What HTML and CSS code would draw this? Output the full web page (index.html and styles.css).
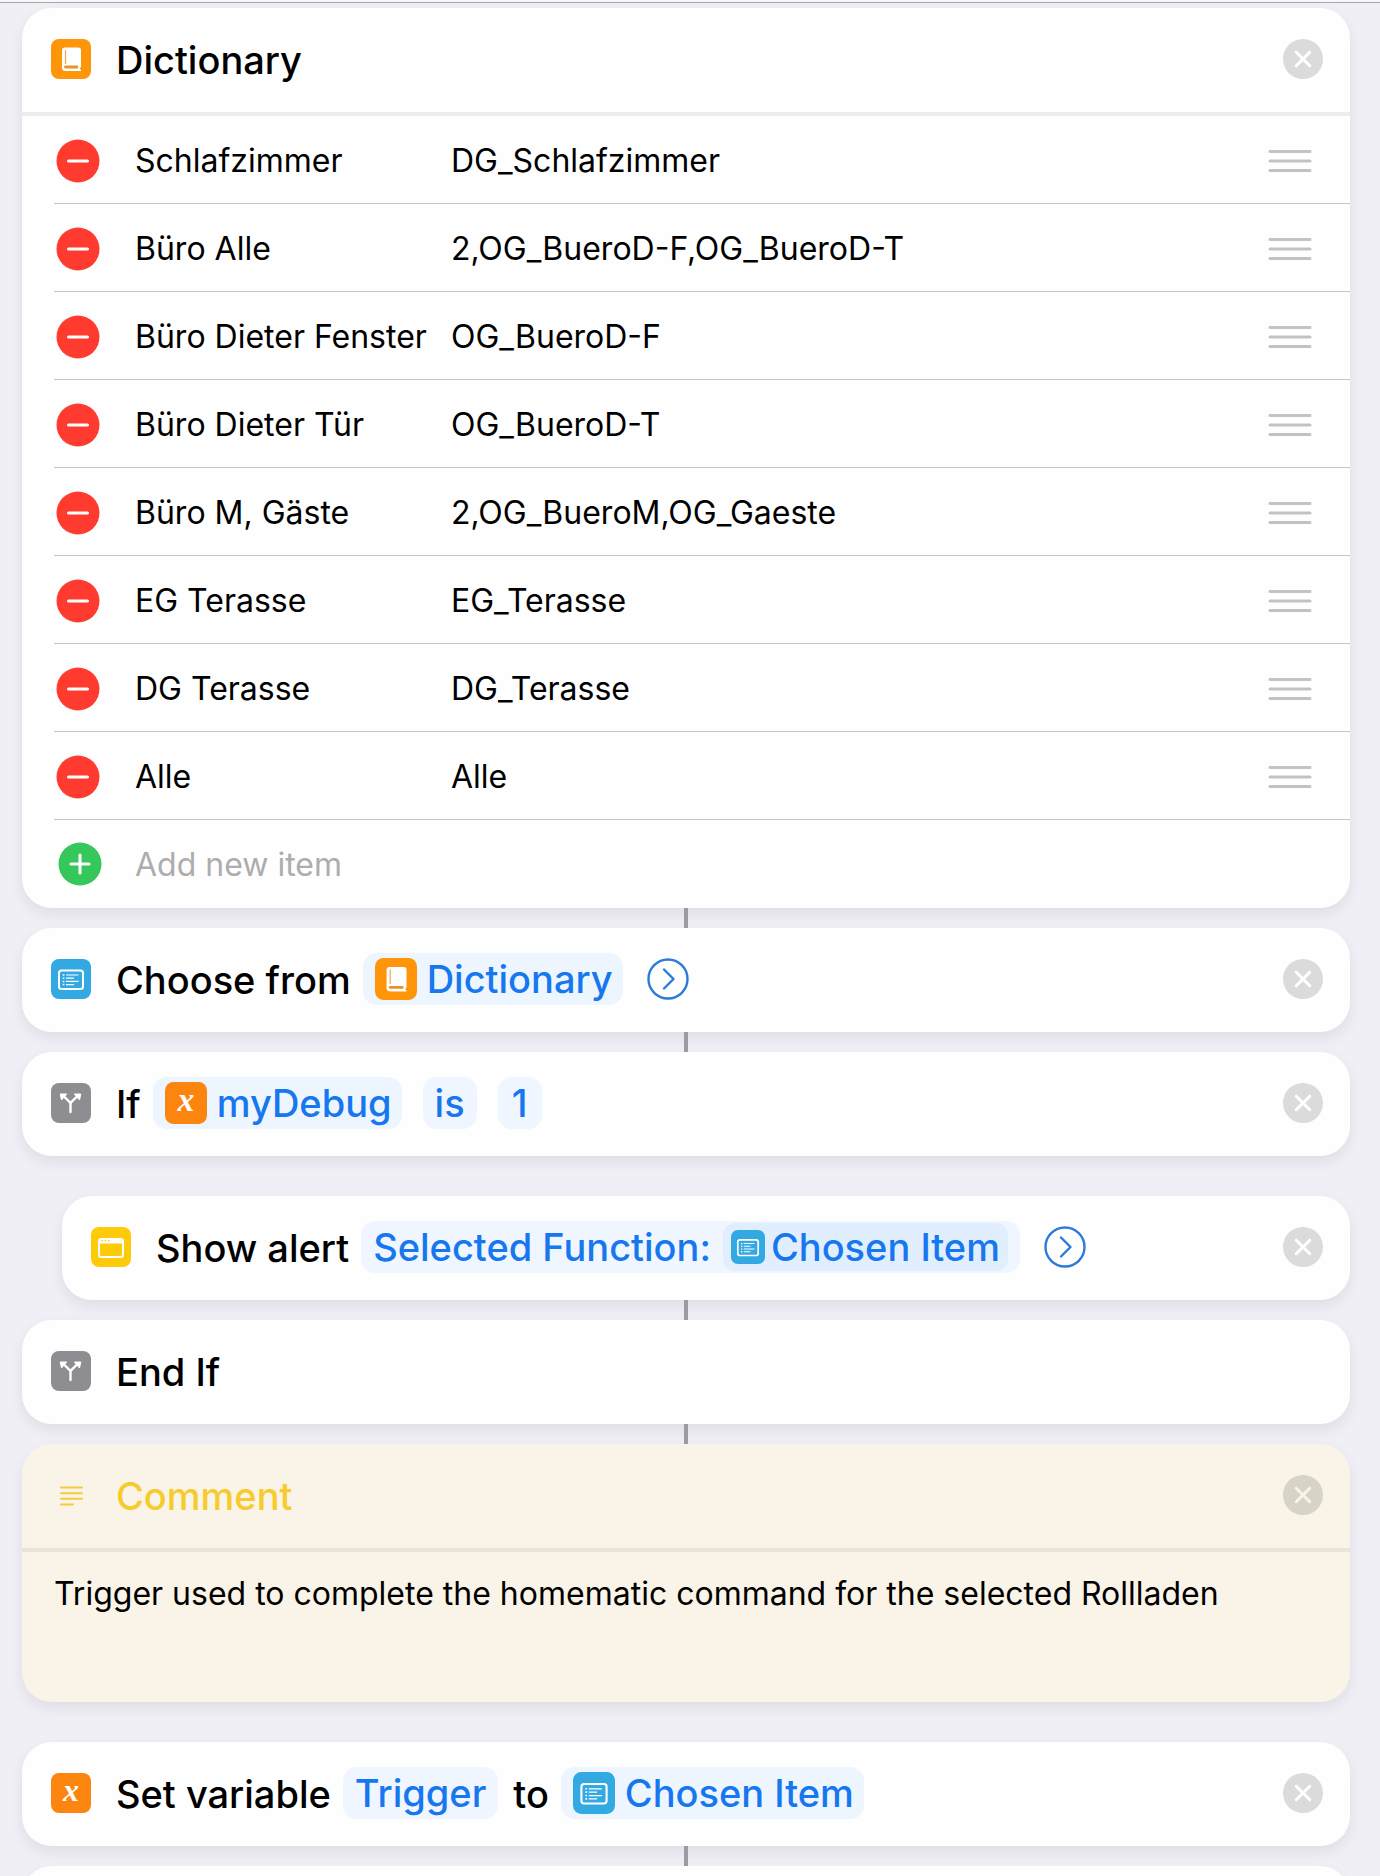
FILE: index.html
```
<!DOCTYPE html>
<html lang="en">
<head>
    <meta charset="UTF-8">
    <meta name="viewport" content="width=device-width, initial-scale=1.0">
    <title>Shortcut</title>
    <link rel="stylesheet" href="styles.css">
</head>
<body>
    <!-- icons used several times -->
    <svg class="sprite" aria-hidden="true">
        <symbol id="book" viewBox="0 0 40 40">
            <rect width="40" height="40" rx="8" fill="#ff9508"/>
            <path d="M14 8.500h13.500q2.500 0 2.500 2.500v16.500q0 .9-.9 1.200v1.900h.9v1.300H14.500q-3.500 0-3.500-3.500V11.500q0-3 3-3z" fill="#fff"/>
            <path d="M14.500 11v14" stroke="#f0ab4e" stroke-width="1.200"/>
            <path d="M14.500 26.600h12.500v2.800h-12.500q-1.400 0-1.400-1.400t1.400-1.400z" fill="#e8932a"/>
        </symbol>
        <symbol id="list" viewBox="0 0 40 40">
            <rect width="40" height="40" rx="8" fill="#32a9e2"/>
            <rect x="8" y="11.500" width="24" height="18.500" rx="2.500" fill="none" stroke="#fff" stroke-width="2"/>
            <path d="M15 16h12.500M15 19.200h8M15 22.400h12.500M15 25.600h8" stroke="#fff" stroke-width="1.200"/>
            <path d="M11.800 16h1.600M11.800 19.200h1.600M11.800 22.400h1.600M11.800 25.600h1.600" stroke="#fff" stroke-width="1.500"/>
        </symbol>
        <symbol id="branch" viewBox="0 0 40 40">
            <rect width="40" height="40" rx="8" fill="#8e8d92"/>
            <path d="M19.500 29v-8q0-1-.8-1.800L13 13.500M19.500 21q0-1 .8-1.800L26 13.500" fill="none" stroke="#fff" stroke-width="2.400" stroke-linecap="round"/>
            <path d="M9.200 11h6.500l-5.200 6zM29.800 11h-6.500l5.200 6z" fill="#fff" stroke="#fff" stroke-width="1" stroke-linejoin="round"/>
        </symbol>
        <symbol id="variable" viewBox="0 0 40 40">
            <rect width="40" height="40" rx="8" fill="#fc8510"/>
            <text x="20" y="28" text-anchor="middle" class="var-letter">x</text>
        </symbol>
        <symbol id="window" viewBox="0 0 40 40">
            <rect width="40" height="40" rx="8" fill="#fecb0a"/>
            <rect x="8" y="12" width="24" height="18" rx="2.500" fill="none" stroke="#fff" stroke-width="2"/>
            <path d="M8 12h24v4.500H8z" fill="#fff"/>
            <path d="M10.500 13.700h1.500M13.700 13.700h1.500M16.900 13.700h1.500" stroke="#fecb0a" stroke-width="1.300"/>
        </symbol>
        <symbol id="lines" viewBox="0 0 40 40">
            <path d="M10 12.500h21M10 18.200h21M10 23.700h21M10 29.500h12" stroke="#f3cd3f" stroke-width="2" stroke-linecap="round"/>
        </symbol>
        <symbol id="cross" viewBox="0 0 40 40">
            <path d="M13.200 13.200l13.600 13.600M26.800 13.200l-13.600 13.600" stroke="currentColor" stroke-width="3" stroke-linecap="round"/>
        </symbol>
        <symbol id="chevron" viewBox="0 0 42 42">
            <circle cx="21" cy="21" r="19.500" fill="none" stroke="currentColor" stroke-width="2.400"/>
            <path d="M17 11.500l9.500 9.500-9.500 9.500" fill="none" stroke="currentColor" stroke-width="2.400" stroke-linecap="round" stroke-linejoin="round"/>
        </symbol>
        <symbol id="minus" viewBox="0 0 44 44">
            <circle cx="22" cy="22" r="21.500" fill="#ff3b30"/>
            <path d="M12.500 22h19" stroke="#fff" stroke-width="3" stroke-linecap="round"/>
        </symbol>
        <symbol id="plus" viewBox="0 0 44 44">
            <circle cx="22" cy="22" r="21.500" fill="#35c759"/>
            <path d="M13 22h18M22 13v18" stroke="#fff" stroke-width="3" stroke-linecap="round"/>
        </symbol>
        <symbol id="grip" viewBox="0 0 44 24">
            <path d="M2 2.500h40M2 12h40M2 21.500h40" stroke="#c3c3c5" stroke-width="3" stroke-linecap="round"/>
        </symbol>
    </svg>

    <main class="editor">
        <section class="card">
            <div class="action">
                <svg class="icon"><use href="#book"/></svg>
                <span class="label">Dictionary</span>
                <button class="close" aria-label="Remove Dictionary"><svg><use href="#cross"/></svg></button>
            </div>
            <ul class="items">
                <li class="item">
                    <button class="round" aria-label="Delete item"><svg><use href="#minus"/></svg></button>
                    <input class="key" aria-label="Key" value="Schlafzimmer">
                    <input class="value" aria-label="Value" value="DG_Schlafzimmer">
                    <svg class="grip"><use href="#grip"/></svg>
                </li>
                <li class="item">
                    <button class="round" aria-label="Delete item"><svg><use href="#minus"/></svg></button>
                    <input class="key" aria-label="Key" value="Büro Alle">
                    <input class="value" aria-label="Value" value="2,OG_BueroD-F,OG_BueroD-T">
                    <svg class="grip"><use href="#grip"/></svg>
                </li>
                <li class="item">
                    <button class="round" aria-label="Delete item"><svg><use href="#minus"/></svg></button>
                    <input class="key" aria-label="Key" value="Büro Dieter Fenster">
                    <input class="value" aria-label="Value" value="OG_BueroD-F">
                    <svg class="grip"><use href="#grip"/></svg>
                </li>
                <li class="item">
                    <button class="round" aria-label="Delete item"><svg><use href="#minus"/></svg></button>
                    <input class="key" aria-label="Key" value="Büro Dieter Tür">
                    <input class="value" aria-label="Value" value="OG_BueroD-T">
                    <svg class="grip"><use href="#grip"/></svg>
                </li>
                <li class="item">
                    <button class="round" aria-label="Delete item"><svg><use href="#minus"/></svg></button>
                    <input class="key" aria-label="Key" value="Büro M, Gäste">
                    <input class="value" aria-label="Value" value="2,OG_BueroM,OG_Gaeste">
                    <svg class="grip"><use href="#grip"/></svg>
                </li>
                <li class="item">
                    <button class="round" aria-label="Delete item"><svg><use href="#minus"/></svg></button>
                    <input class="key" aria-label="Key" value="EG Terasse">
                    <input class="value" aria-label="Value" value="EG_Terasse">
                    <svg class="grip"><use href="#grip"/></svg>
                </li>
                <li class="item">
                    <button class="round" aria-label="Delete item"><svg><use href="#minus"/></svg></button>
                    <input class="key" aria-label="Key" value="DG Terasse">
                    <input class="value" aria-label="Value" value="DG_Terasse">
                    <svg class="grip"><use href="#grip"/></svg>
                </li>
                <li class="item">
                    <button class="round" aria-label="Delete item"><svg><use href="#minus"/></svg></button>
                    <input class="key" aria-label="Key" value="Alle">
                    <input class="value" aria-label="Value" value="Alle">
                    <svg class="grip"><use href="#grip"/></svg>
                </li>
            </ul>
            <button class="add-item">
                <svg><use href="#plus"/></svg>
                <span>Add new item</span>
            </button>
        </section>

        <div class="connector"></div>

        <section class="card">
            <div class="action">
                <svg class="icon"><use href="#list"/></svg>
                <span class="label">Choose from</span>
                <button class="pill"><svg class="pill-icon"><use href="#book"/></svg>Dictionary</button>
                <button class="more" aria-label="Show more"><svg><use href="#chevron"/></svg></button>
                <button class="close" aria-label="Remove Choose from"><svg><use href="#cross"/></svg></button>
            </div>
        </section>

        <div class="connector"></div>

        <section class="card">
            <div class="action">
                <svg class="icon"><use href="#branch"/></svg>
                <span class="label">If</span>
                <button class="pill"><svg class="pill-icon"><use href="#variable"/></svg>myDebug</button>
                <button class="pill plain">is</button>
                <button class="pill plain">1</button>
                <button class="close" aria-label="Remove If"><svg><use href="#cross"/></svg></button>
            </div>
        </section>

        <section class="card nested spaced">
            <div class="action">
                <svg class="icon"><use href="#window"/></svg>
                <span class="label">Show alert</span>
                <button class="pill plain">Selected Function:<span class="token"><svg><use href="#list"/></svg>Chosen Item</span></button>
                <button class="more" aria-label="Show more"><svg><use href="#chevron"/></svg></button>
                <button class="close" aria-label="Remove Show alert"><svg><use href="#cross"/></svg></button>
            </div>
        </section>

        <div class="connector"></div>

        <section class="card">
            <div class="action">
                <svg class="icon"><use href="#branch"/></svg>
                <span class="label">End If</span>
            </div>
        </section>

        <div class="connector"></div>

        <section class="card comment">
            <div class="action">
                <svg class="icon"><use href="#lines"/></svg>
                <label class="label" for="comment">Comment</label>
                <button class="close" aria-label="Remove Comment"><svg><use href="#cross"/></svg></button>
            </div>
            <textarea class="comment-text" id="comment" rows="2">Trigger used to complete the homematic command for the selected Rollladen</textarea>
        </section>

        <section class="card spaced">
            <div class="action">
                <svg class="icon"><use href="#variable"/></svg>
                <span class="label">Set variable</span>
                <button class="pill plain">Trigger</button>
                <span class="label">to</span>
                <button class="pill"><svg class="pill-icon"><use href="#list"/></svg>Chosen Item</button>
                <button class="close" aria-label="Remove Set variable"><svg><use href="#cross"/></svg></button>
            </div>
        </section>

        <div class="connector"></div>

        <section class="card">
            <div class="action"></div>
        </section>
    </main>
</body>
</html>
```

FILE: styles.css
```
* {
    box-sizing: border-box;
}

body {
    margin: 0;
    background-color: #f0eff5;
    color: #000;
    font-family: Inter, "Liberation Sans", sans-serif;
}

button,
input,
textarea {
    margin: 0;
    padding: 0;
    border: none;
    background: none;
    color: inherit;
    font: inherit;
}

button {
    cursor: pointer;
}

svg {
    display: block;
    flex: none;
}

.sprite {
    display: none;
}

.var-letter {
    font: italic bold 32px "Liberation Serif", serif;
    fill: #fff;
}

.editor {
    height: 100vh;
    overflow: hidden;
    padding: 8px 30px 0 22px;
    background: linear-gradient(#f7f7fa 2px, #a9a8ad 2px, #a9a8ad 3px, #f0eff5 3px);
}

.card {
    background-color: #fefefe;
    border-radius: 30px;
    box-shadow: 0 6px 14px rgba(30, 30, 50, 0.08);
}

.nested {
    margin-left: 40px;
}

.spaced {
    margin-top: 40px;
}

/* line between two actions */
.connector {
    position: relative;
    width: 4px;
    height: 20px;
    margin: 0 auto;
    background-color: #9c9ba4;
}

.action {
    display: flex;
    align-items: center;
    height: 104px;
    padding: 0 27px 2px 29px;
    font-size: 38px;
    font-weight: 500;
    line-height: 48px;
    white-space: nowrap;
}

.icon {
    width: 40px;
    height: 40px;
    margin-right: 25px;
}

.label {
    padding-top: 2px;
}

.pill {
    display: flex;
    align-items: center;
    justify-content: center;
    min-width: 44px;
    height: 52px;
    margin-left: 12px;
    padding: 0 10px 0 12px;
    border-radius: 14px;
    background-color: #edf5fe;
    color: #1677ee;
}

.pill + .pill {
    margin-left: 21px;
}

.pill + .label {
    margin-left: 15px;
}

.plain {
    padding: 0 12px;
    background-color: #f0f6ff;
}

.pill-icon {
    width: 42px;
    height: 42px;
    margin-right: 10px;
}

.token {
    display: flex;
    align-items: center;
    height: 48px;
    margin-left: 12px;
    padding: 0 8px;
    border-radius: 12px;
    background-color: #e0eefe;
}

.token svg {
    width: 34px;
    height: 34px;
    margin-right: 6px;
}

.more {
    margin-left: 24px;
    color: #2a7bdc;
}

.more svg {
    width: 42px;
    height: 42px;
}

.close {
    width: 40px;
    height: 40px;
    margin-left: auto;
    border-radius: 50%;
    background-color: #dbdbdb;
    color: #fff;
}

.close svg {
    width: 40px;
    height: 40px;
}

/* dictionary rows */
.items {
    margin: 0;
    padding: 0;
    border-top: 4px solid #ededed;
    list-style: none;
}

.item {
    display: flex;
    align-items: center;
    height: 88px;
    margin-left: 32px;
    padding: 2px 38px 0 2px;
    border-bottom: 1px solid #c6c6c8;
    font-size: 32px;
}

.round svg,
.add-item svg {
    width: 44px;
    height: 44px;
}

.key {
    width: 300px;
    margin: 0 16px 0 35px;
}

.value {
    flex: 1;
    min-width: 0;
}

.grip {
    width: 44px;
    height: 24px;
}

.add-item {
    display: flex;
    align-items: center;
    gap: 33px;
    width: 100%;
    height: 88px;
    padding: 0 36px;
    color: #adadad;
    font-size: 32px;
}

/* comment */
.comment {
    background-color: #faf4e8;
}

.comment .label {
    color: #f7cb2d;
}

.comment .close {
    background-color: #d7d3c8;
    color: #faf4e8;
}

.comment-text {
    display: block;
    width: 100%;
    padding: 22px 32px 48px;
    border-top: 4px solid #e9e4d9;
    font-size: 32px;
    line-height: 40px;
    resize: none;
    overflow: hidden;
}
```
